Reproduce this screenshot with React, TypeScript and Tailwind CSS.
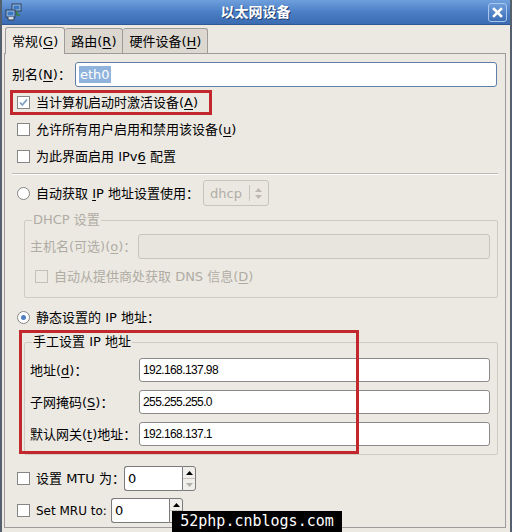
import React from 'react';

const FONT = "font-['DejaVu_Sans','Noto_Sans_CJK_SC',sans-serif]";

const Mn = ({ k }: { k: string }) => (
  <>
    (<span className="underline underline-offset-2">{k}</span>)
  </>
);

const CheckBox = ({ checked = false, disabled = false }: { checked?: boolean; disabled?: boolean }) => (
  <span
    className={`w-[13px] h-[13px] shrink-0 border flex items-center justify-center ${
      disabled ? 'border-[#c4c0b8] bg-[#ece9e3]' : 'border-[#868686] bg-white'
    }`}
  >
    {checked && (
      <svg width="11" height="11" viewBox="0 0 11 11">
        <path d="M2 5.5 L4.3 8 L9 2.5" fill="none" stroke="#7e9ec6" strokeWidth="1.8" />
      </svg>
    )}
  </span>
);

const Radio = ({ checked = false }: { checked?: boolean }) => (
  <span className="w-[13px] h-[13px] shrink-0 rounded-full border border-[#868686] bg-white flex items-center justify-center">
    {checked && <span className="w-[5px] h-[5px] rounded-full bg-[#4f7fbf]" />}
  </span>
);

const Entry = ({ value, className = '' }: { value?: string; className?: string }) => (
  <div
    className={`h-full flex-1 rounded-[3px] border border-[#8b8b8b] bg-white flex items-center pl-[3px] text-[12px] tracking-[-0.6px] font-['Liberation_Sans',sans-serif] text-black ${className}`}
  >
    {value}
  </div>
);

const Spin = ({ width, upOnly = false }: { width: string; upOnly?: boolean }) => (
  <div className={`h-[25px] flex shrink-0 ${width}`}>
    <div className="flex-1 h-full border border-[#7b7b7b] border-r-0 rounded-l-[3px] bg-white flex items-center pl-[3px] text-[13px]">
      0
    </div>
    <div className="w-[14px] h-full border border-[#7b7b7b] rounded-r-[3px] bg-[#f1efeb] flex flex-col">
      <div className="flex-1 flex items-center justify-center border-b border-[#c7c3bb]">
        <svg width="7" height="4" viewBox="0 0 7 4">
          <path d="M0 4 L3.5 0 L7 4 Z" fill="#000" />
        </svg>
      </div>
      <div className="flex-1 flex items-center justify-center">
        {!upOnly && (
          <svg width="7" height="4" viewBox="0 0 7 4">
            <path d="M0 0 L3.5 4 L7 0 Z" fill="#b3b0aa" />
          </svg>
        )}
      </div>
    </div>
  </div>
);

const NetIcon = () => (
  <svg width="18" height="18" viewBox="0 0 18 18">
    <rect x="7" y="1" width="9" height="7" fill="#9cc4ea" stroke="#2c3d58" />
    <rect x="8.5" y="2.5" width="6" height="4" fill="#3f78c2" />
    <rect x="1" y="7" width="9" height="7" fill="#9cc4ea" stroke="#2c3d58" />
    <rect x="2.5" y="8.5" width="6" height="4" fill="#3f78c2" />
    <path d="M3 14 v3 h6 v-3" fill="#d8dde4" stroke="#2c3d58" />
    <path d="M12 8 v4 h3" fill="none" stroke="#3a7d3a" strokeWidth="1.5" />
  </svg>
);

export default function App() {
  return (
    <div className={`w-[512px] h-[532px] relative overflow-hidden bg-[#ece9e3] border-x-2 border-[#55606e] ${FONT} text-[13px] text-black leading-none whitespace-nowrap`}>
      {/* Title bar */}
      <div className="h-[25px] -mx-[2px] bg-gradient-to-b from-[#6f9fdc] via-[#4b7fc6] to-[#3b6bb1] border-b border-[#2f5895] flex items-center px-[5px] relative">
        <NetIcon />
        <div className="flex-1 text-center text-white font-bold text-[14px] [text-shadow:1px_1px_0_#22406e]">
          以太网设备
        </div>
        <div className="w-[19px] h-[19px] rounded-[3px] border border-[#a9c6ec] bg-gradient-to-b from-[#6e9edb] to-[#3d6db4] flex items-center justify-center">
          <svg width="11" height="11" viewBox="0 0 11 11">
            <path d="M2 2 L9 9 M9 2 L2 9" stroke="#fff" strokeWidth="2.6" strokeLinecap="square" />
          </svg>
        </div>
      </div>

      {/* Tabs */}
      <div className="flex items-end h-[28px] pl-[3px] pt-[2px]">
        <div className="h-[27px] px-[6px] bg-[#ece9e3] border border-b-0 border-[#9d9c9b] rounded-t-[3px] flex items-center relative z-10 -mb-px">
          常规<Mn k="G" />
        </div>
        <div className="h-[25px] px-[6px] bg-[#dcd7cf] border border-b-0 border-l-0 border-[#9d9c9b] rounded-t-[3px] flex items-center">
          路由<Mn k="R" />
        </div>
        <div className="h-[25px] px-[6px] bg-[#dcd7cf] border border-b-0 border-l-0 border-[#9d9c9b] rounded-t-[3px] flex items-center">
          硬件设备<Mn k="H" />
        </div>
      </div>

      {/* Notebook page */}
      <div className="ml-[2px] w-[502px] h-[475px] border border-[#9d9c9b] pl-[7px] pr-[7px] pt-[8px]">
        {/* Alias */}
        <div className="flex items-center h-[25px]">
          <span className="w-[63px]">别名<Mn k="N" />：</span>
          <div className="flex-1 h-full mr-[1px] rounded-[3px] border border-[#5d7fa9] bg-white flex items-center pl-[3px]">
            <span className="bg-[#8fb3dd] text-white px-[1px] py-[2px]">eth0</span>
          </div>
        </div>

        {/* Checkboxes */}
        <div className="mt-[2px] h-[27px] flex items-center gap-[6px] pl-[5px]">
          <CheckBox checked />
          <span>当计算机启动时激活设备<Mn k="A" /></span>
        </div>
        <div className="h-[27px] flex items-center gap-[6px] pl-[5px]">
          <CheckBox />
          <span>允许所有用户启用和禁用该设备<Mn k="u" /></span>
        </div>
        <div className="h-[27px] flex items-center gap-[6px] pl-[5px]">
          <CheckBox />
          <span>为此界面启用 IPv<span className="underline underline-offset-2">6</span> 配置</span>
        </div>

        {/* Separator */}
        <div className="mt-[3px] h-px bg-[#bcb8b0]" />
        <div className="h-px bg-white" />

        {/* DHCP radio */}
        <div className="mt-[5px] h-[26px] flex items-center pl-[5px]">
          <Radio />
          <span className="ml-[6px] w-[167px] shrink-0">自动获取 <span className="underline underline-offset-2">I</span>P 地址设置使用：</span>
          <div className="w-[66px] h-[26px] rounded-[3px] border border-[#c8c4bc] bg-[#ebe8e2] flex items-center text-[#b2aea7]">
            <span className="pl-[6px] w-[45px]">dhcp</span>
            <span className="h-[16px] w-px bg-[#c8c4bc]" />
            <svg className="ml-[5px]" width="7" height="11" viewBox="0 0 7 11">
              <path d="M0 4 L3.5 0 L7 4 Z M0 7 L3.5 11 L7 7 Z" fill="#bdb9b2" />
            </svg>
          </div>
        </div>

        {/* DHCP frame */}
        <fieldset className="mt-[7px] ml-[12px] border border-[#cfcbc3] rounded-[2px] pl-[5px] pr-[7px] pb-[8px] text-[#b0aca4]">
          <legend className="ml-[2px] px-[1px] leading-[14px]">DHCP 设置</legend>
          <div className="mt-[7px] h-[25px] flex items-center">
            <span className="w-[108px]">主机名(可选)<Mn k="o" />：</span>
            <div className="flex-1 h-full rounded-[3px] border border-[#c8c4bc] bg-[#e8e5df]" />
          </div>
          <div className="mt-[4px] h-[26px] flex items-center gap-[6px] pl-[5px]">
            <CheckBox disabled />
            <span>自动从提供商处获取 DNS 信息<Mn k="D" /></span>
          </div>
        </fieldset>

        {/* Static radio */}
        <div className="mt-[6px] h-[26px] flex items-center pl-[5px]">
          <Radio checked />
          <span className="ml-[6px]">静态设置的 IP 地址：</span>
        </div>

        {/* Manual frame */}
        <fieldset className="mt-[5px] ml-[12px] border border-[#cfcbc3] rounded-[2px] pl-[5px] pr-[7px] pb-[8px]">
          <legend className="ml-[2px] px-[1px] leading-[14px]">手工设置 IP 地址</legend>
          <div className="mt-[9px] h-[24px] flex items-center">
            <span className="w-[109px]">地址<Mn k="d" />：</span>
            <Entry value="192.168.137.98" />
          </div>
          <div className="mt-[8px] h-[24px] flex items-center">
            <span className="w-[109px]">子网掩码<Mn k="S" />：</span>
            <Entry value="255.255.255.0" />
          </div>
          <div className="mt-[8px] h-[24px] flex items-center">
            <span className="w-[109px]">默认网关<Mn k="t" />地址：</span>
            <Entry value="192.168.137.1" />
          </div>
        </fieldset>

        {/* MTU / MRU */}
        <div className="mt-[11px] h-[25px] flex items-center pl-[5px]">
          <CheckBox />
          <span className="ml-[6px] w-[88px] shrink-0">设置 MTU 为：</span>
          <Spin width="w-[72px]" />
        </div>
        <div className="mt-[7px] h-[25px] flex items-center pl-[5px]">
          <CheckBox />
          <span className="ml-[6px] w-[75px] shrink-0 text-[12px]">Set MRU to:</span>
          <Spin width="w-[72px]" upOnly />
        </div>
      </div>

      {/* Annotation boxes */}
      <div className="absolute left-[8px] top-[90px] w-[202px] h-[25px] border-[3px] border-[#c1272d]" />
      <div className="absolute left-[17px] top-[330px] w-[340px] h-[124px] border-[3px] border-[#c1272d]" />

      {/* Watermark */}
      <div className="absolute left-[170px] top-[511px] w-[170px] h-[21px] bg-black text-white font-['DejaVu_Sans_Mono',monospace] text-[15px] flex items-center justify-center">
        52php.cnblogs.com
      </div>
    </div>
  );
}
